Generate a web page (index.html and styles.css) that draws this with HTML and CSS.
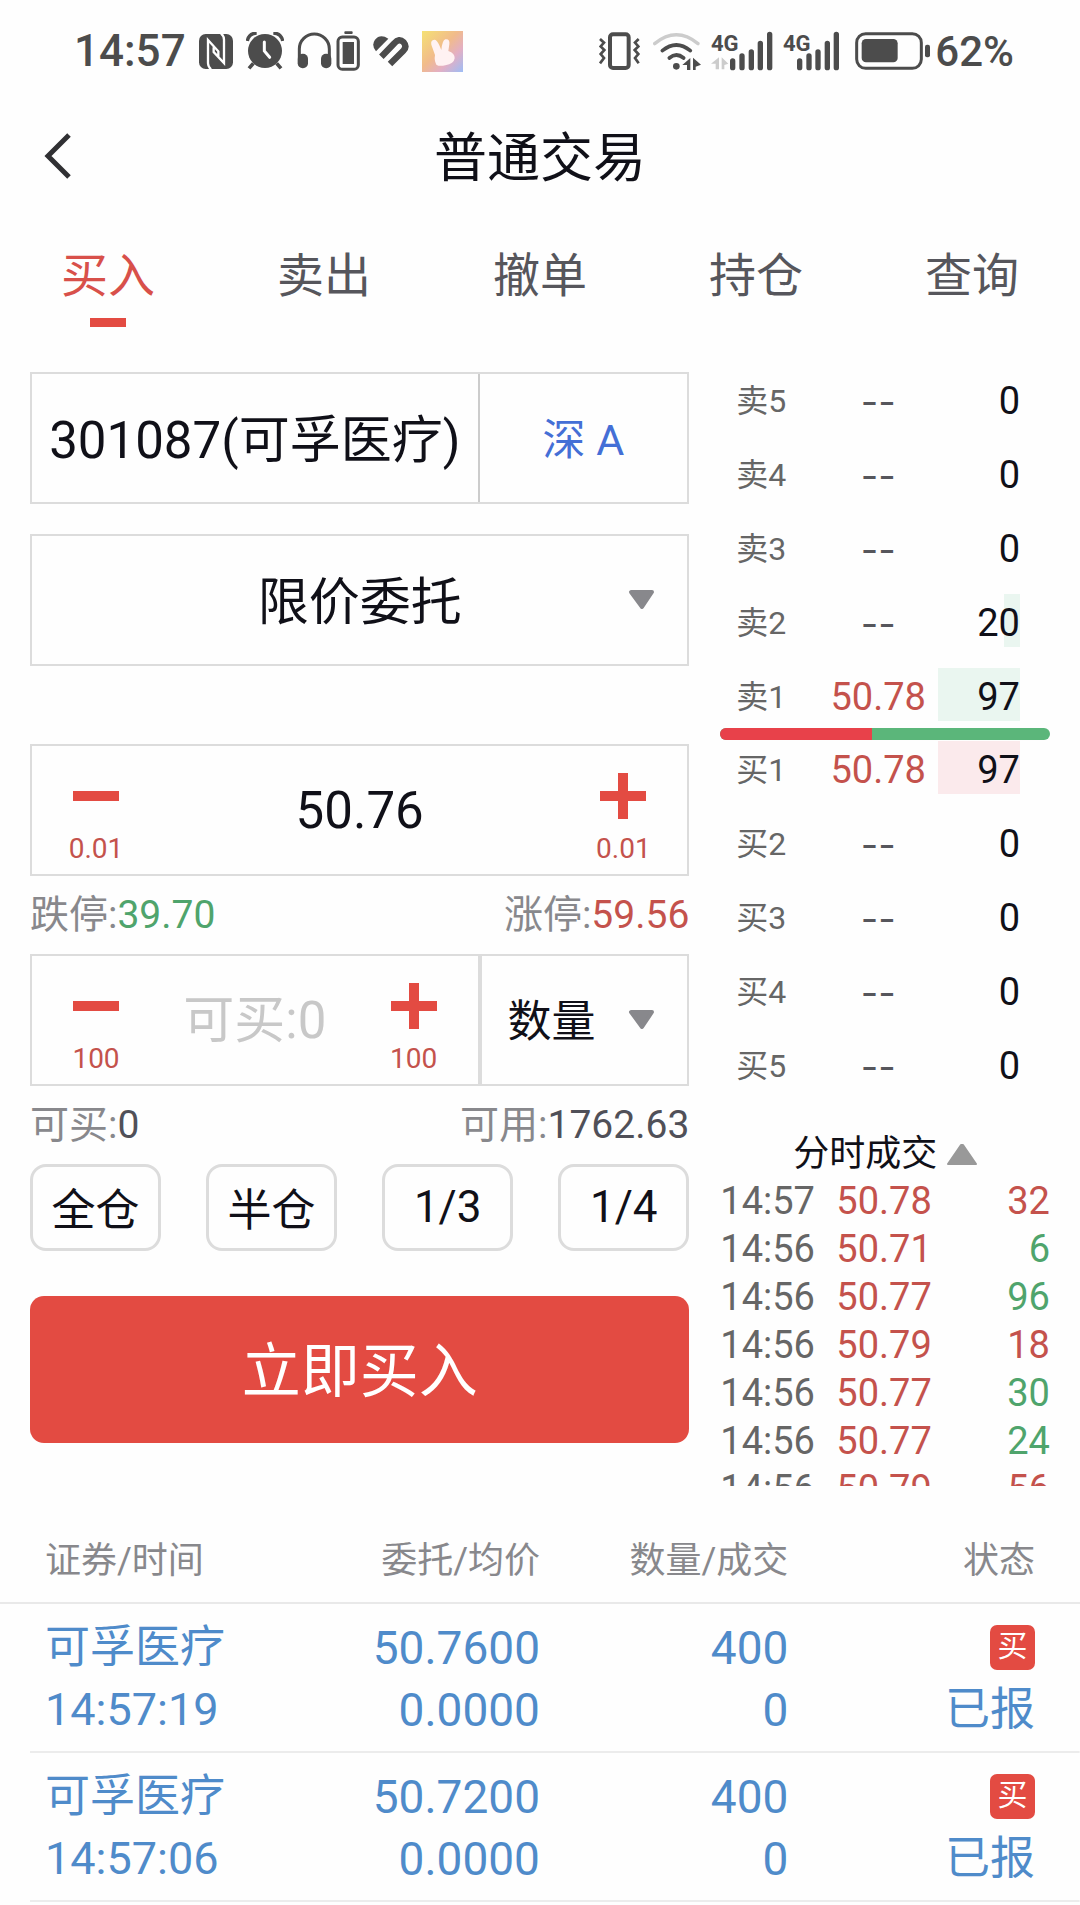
FILE: index.html
```html
<!DOCTYPE html>
<html lang="zh-CN">
<head>
  <meta charset="UTF-8">
  <meta name="viewport" content="width=device-width, initial-scale=1">
  <title>普通交易</title>
  <link rel="stylesheet" href="styles.css">
</head>
<body>
  <div class="status-bar">
    <div class="status-left">
      <span class="time">14:57</span>
      <!-- nfc -->
      <svg class="icon nfc" width="34" height="35" viewBox="0 0 102 105">
        <rect width="102" height="105" rx="20" fill="#4c4c4c"/>
        <path d="M36 106Q27 98 27 88V18L58 52V68M66 -2Q75 6 75 17V87L44 54V40" fill="none" stroke="#fff" stroke-width="7"/>
      </svg>
      <!-- alarm -->
      <svg class="icon alarm" width="38" height="38" viewBox="0 0 114 114">
        <circle cx="57" cy="57" r="51" fill="#4c4c4c"/>
        <path d="M4 27Q8 4 32 3M110 27Q106 4 82 3" fill="none" stroke="#4c4c4c" stroke-width="10"/>
        <path d="M22 94L9 109M92 94L105 109" stroke="#4c4c4c" stroke-width="11"/>
        <path d="M55 30V57L71 76" fill="none" stroke="#fff" stroke-width="9" stroke-linecap="round"/>
      </svg>
      <!-- headphones with battery -->
      <svg class="icon headset" width="63" height="40" viewBox="0 0 189 120">
        <path d="M7 80V54a45 45 0 0 1 90 0V80" fill="none" stroke="#4c4c4c" stroke-width="9"/>
        <rect x="2" y="68" width="31" height="44" rx="15" fill="#4c4c4c"/>
        <rect x="72" y="68" width="31" height="44" rx="15" fill="#4c4c4c"/>
        <rect x="142" y="1" width="25" height="8" rx="3" fill="#4c4c4c"/>
        <rect x="123" y="18" width="61" height="97" rx="13" fill="none" stroke="#4c4c4c" stroke-width="9"/>
        <rect x="137" y="33" width="34" height="66" fill="#4c4c4c"/>
      </svg>
      <!-- health -->
      <svg class="icon health" width="36" height="31" viewBox="0 0 108 93">
        <path d="M9 46Q-6 28 6 11Q22-8 46 8Z" fill="#4c4c4c"/>
        <path d="M25 62L64 22Q78 5 92 19Q103 32 91 44L51 84" stroke="#4c4c4c" stroke-width="19" fill="none"/>
      </svg>
      <!-- rabbit app -->
      <svg class="icon rabbit" width="41" height="41" viewBox="0 0 123 123">
        <defs>
          <linearGradient id="sky" x1="0" y1="0" x2="1" y2="1">
            <stop offset="0" stop-color="#f5e173"/>
            <stop offset=".45" stop-color="#f1bb8b"/>
            <stop offset=".7" stop-color="#e3afc4"/>
            <stop offset="1" stop-color="#9dbdf6"/>
          </linearGradient>
        </defs>
        <rect width="123" height="123" fill="url(#sky)"/>
        <path d="M43 101Q36 88 39 72L28 41Q25 27 37 26Q45 26 52 43L58 57Q61 27 70 25Q84 23 82 40L79 60Q99 67 98 82Q96 98 70 103Q51 107 43 101Z" fill="#fff2f2"/>
      </svg>
    </div>
    <div class="status-right">
      <!-- vibrate -->
      <svg class="icon vibrate" width="43" height="38" viewBox="0 0 129 114">
        <rect x="36" y="7" width="56" height="101" rx="9" fill="none" stroke="#4c4c4c" stroke-width="12"/>
        <path d="M6 21L18 32L8 43L19 54L8 66L18 78L6 94M122 21L111 32L121 43L110 54L121 66L111 78L122 94" fill="none" stroke="#4c4c4c" stroke-width="8"/>
      </svg>
      <!-- wifi -->
      <svg class="icon wifi" width="48" height="39" viewBox="0 0 144 117">
        <path d="M5 35Q70-18 135 35" fill="none" stroke="#ccc" stroke-width="10" stroke-linecap="round"/>
        <path d="M28 56Q70 22 112 56M49 78Q70 60 92 78" fill="none" stroke="#4c4c4c" stroke-width="11" stroke-linecap="round"/>
        <circle cx="70" cy="103" r="10" fill="#4c4c4c"/>
        <path d="M88 99L112 78V114H102V99ZM120 77L144 98L128 104V114H120Z" fill="#4c4c4c"/>
      </svg>
      <!-- mobile signal, sim 1 -->
      <svg class="icon signal" width="62" height="39" viewBox="0 0 186 117">
        <text x="0" y="56" class="net">4G</text>
        <path d="M0 95L24 76V112H14V95ZM32 76L52 95L40 99V112H32Z" fill="#ccc"/>
        <path d="M65 87V107M93 72V107M121 60V107M148 34V107M176 7V107" stroke="#4c4c4c" stroke-width="16" stroke-linecap="round"/>
      </svg>
      <!-- mobile signal, sim 2 -->
      <svg class="icon signal" width="57" height="39" viewBox="0 0 171 117">
        <text x="0" y="56" class="net">4G</text>
        <path d="M50 87V107M78 72V107M105 60V107M133 34V107M160 7V107" stroke="#4c4c4c" stroke-width="16" stroke-linecap="round"/>
      </svg>
      <!-- battery -->
      <svg class="icon battery" width="76" height="38" viewBox="0 0 228 114">
        <rect x="5" y="5" width="194" height="104" rx="27" fill="none" stroke="#4c4c4c" stroke-width="9"/>
        <rect x="20" y="21" width="108" height="70" rx="13" fill="#4c4c4c"/>
        <rect x="210" y="38" width="15" height="38" rx="6" fill="#4c4c4c"/>
      </svg>
      <span class="percent">62%</span>
    </div>
  </div>

  <header class="header">
    <button class="back" aria-label="返回">
      <svg width="28" height="48" viewBox="0 0 28 48">
        <path d="M25 3L4 24L25 45" fill="none" stroke="#303033" stroke-width="5"/>
      </svg>
    </button>
    <h1>普通交易</h1>
  </header>

  <nav class="tabs">
    <a href="#" class="active">买入</a>
    <a href="#">卖出</a>
    <a href="#">撤单</a>
    <a href="#">持仓</a>
    <a href="#">查询</a>
  </nav>

  <main class="trade">
    <form class="order-form">
      <div class="box">
        <input class="wide code" type="text" value="301087(可孚医疗)" aria-label="证券代码">
        <button type="button" class="side market">深 A</button>
      </div>

      <div class="box order-type">
        <select aria-label="委托方式">
          <option>限价委托</option>
        </select>
        <svg class="arrow" width="27" height="20" viewBox="0 0 27 20">
          <path d="M3 2H24L14 17Z" fill="#88888c" stroke="#88888c" stroke-width="4" stroke-linejoin="round"/>
        </svg>
      </div>

      <div class="box price">
        <button type="button" class="step">
          <svg width="46" height="46" viewBox="0 0 46 46"><path d="M0 23H46" stroke="#e34b42" stroke-width="10"/></svg>
          0.01
        </button>
        <input type="text" value="50.76" aria-label="价格">
        <button type="button" class="step">
          <svg width="46" height="46" viewBox="0 0 46 46"><path d="M0 23H46M23 0V46" stroke="#e34b42" stroke-width="10"/></svg>
          0.01
        </button>
      </div>

      <div class="info">
        <span>跌停:<b class="green">39.70</b></span>
        <span>涨停:<b class="red">59.56</b></span>
      </div>

      <div class="box">
        <div class="wide amount">
          <button type="button" class="step">
            <svg width="46" height="46" viewBox="0 0 46 46"><path d="M0 23H46" stroke="#e34b42" stroke-width="10"/></svg>
            100
          </button>
          <input type="text" placeholder="可买:0" aria-label="数量">
          <button type="button" class="step">
            <svg width="46" height="46" viewBox="0 0 46 46"><path d="M0 23H46M23 0V46" stroke="#e34b42" stroke-width="10"/></svg>
            100
          </button>
        </div>
        <div class="side unit">
          <select aria-label="单位">
            <option>数量</option>
          </select>
          <svg class="arrow" width="27" height="20" viewBox="0 0 27 20">
            <path d="M3 2H24L14 17Z" fill="#88888c" stroke="#88888c" stroke-width="4" stroke-linejoin="round"/>
          </svg>
        </div>
      </div>

      <div class="info">
        <span>可买:<b>0</b></span>
        <span>可用:<b>1762.63</b></span>
      </div>

      <div class="portions">
        <button type="button">全仓</button>
        <button type="button">半仓</button>
        <button type="button">1/3</button>
        <button type="button">1/4</button>
      </div>

      <button type="button" class="submit">立即买入</button>
    </form>

    <aside class="quotes">
      <div class="book">
        <div class="level"><span>卖5</span><span class="none">--</span><span class="vol">0</span></div>
        <div class="level"><span>卖4</span><span class="none">--</span><span class="vol">0</span></div>
        <div class="level"><span>卖3</span><span class="none">--</span><span class="vol">0</span></div>
        <div class="level"><span>卖2</span><span class="none">--</span><span class="vol"><i class="bar sell" style="width: 20%"></i>20</span></div>
        <div class="level"><span>卖1</span><span class="red">50.78</span><span class="vol"><i class="bar sell" style="width: 100%"></i>97</span></div>
      </div>
      <div class="ratio"><i style="width: 46%"></i></div>
      <div class="book">
        <div class="level"><span>买1</span><span class="red">50.78</span><span class="vol"><i class="bar buy" style="width: 100%"></i>97</span></div>
        <div class="level"><span>买2</span><span class="none">--</span><span class="vol">0</span></div>
        <div class="level"><span>买3</span><span class="none">--</span><span class="vol">0</span></div>
        <div class="level"><span>买4</span><span class="none">--</span><span class="vol">0</span></div>
        <div class="level"><span>买5</span><span class="none">--</span><span class="vol">0</span></div>
      </div>

      <button type="button" class="ticks-title">
        分时成交
        <svg width="30" height="21" viewBox="0 0 30 21"><path d="M1 20L14 1H16L29 20Z" fill="#999" stroke="#999" stroke-width="2" stroke-linejoin="round"/></svg>
      </button>
      <div class="ticks">
        <div class="tick"><span>14:57</span><span class="red">50.78</span><span class="red">32</span></div>
        <div class="tick"><span>14:56</span><span class="red">50.71</span><span class="green">6</span></div>
        <div class="tick"><span>14:56</span><span class="red">50.77</span><span class="green">96</span></div>
        <div class="tick"><span>14:56</span><span class="red">50.79</span><span class="red">18</span></div>
        <div class="tick"><span>14:56</span><span class="red">50.77</span><span class="green">30</span></div>
        <div class="tick"><span>14:56</span><span class="red">50.77</span><span class="green">24</span></div>
        <div class="tick"><span>14:56</span><span class="red">50.79</span><span class="red">56</span></div>
      </div>
    </aside>
  </main>

  <table class="orders">
    <thead>
      <tr>
        <th>证券/时间</th>
        <th>委托/均价</th>
        <th>数量/成交</th>
        <th>状态</th>
      </tr>
    </thead>
    <tbody>
      <tr>
        <td>可孚医疗<br>14:57:19</td>
        <td>50.7600<br>0.0000</td>
        <td>400<br>0</td>
        <td><span class="tag">买</span><br>已报</td>
      </tr>
      <tr>
        <td>可孚医疗<br>14:57:06</td>
        <td>50.7200<br>0.0000</td>
        <td>400<br>0</td>
        <td><span class="tag">买</span><br>已报</td>
      </tr>
    </tbody>
  </table>
</body>
</html>
```

FILE: styles.css
```css
* {
  box-sizing: border-box;
}

body {
  margin: 0;
  background: #fefefe;
  color: #101018;
  font-family: Roboto, "Noto Sans CJK SC", sans-serif;
}

button, input, select {
  font-family: inherit;
  color: inherit;
  background: none;
  border: none;
  border-radius: 0;
  margin: 0;
  padding: 0;
}

button, select {
  cursor: pointer;
}

svg {
  display: block;
  flex-shrink: 0;
}

a {
  text-decoration: none;
}

.red {
  color: #c4524c;
}

.green {
  color: #4fa46c;
}

/* status bar */
.status-bar {
  display: flex;
  justify-content: space-between;
  align-items: center;
  height: 102px;
  padding: 0 66px 0 74px;
  color: #4c4c4c;
  font-size: 44px;
  font-weight: 500;
}

.status-left, .status-right {
  display: flex;
  align-items: center;
}

.status-left {
  gap: 13px;
}

.status-right {
  gap: 10px;
}

.vibrate {
  margin-right: 2px;
}

.battery {
  margin-left: 5px;
}

.percent {
  margin-left: -6px;
  font-size: 42px;
}

.signal {
  overflow: visible;
}

.net {
  font-size: 66px;
  font-weight: 700;
  fill: #4c4c4c;
}

/* header */
.header {
  position: relative;
  display: flex;
  justify-content: center;
  align-items: center;
  height: 108px;
}

.header h1 {
  margin: 0;
  padding-bottom: 4px;
  font-size: 53px;
  font-weight: 400;
}

.back {
  position: absolute;
  left: 32px;
  padding: 12px;
}

.tabs {
  display: flex;
  padding-top: 36px;
}

.tabs a {
  flex: 1;
  text-align: center;
  font-size: 47px;
  line-height: 60px;
  color: #56565c;
}

.tabs a::after {
  content: "";
  display: block;
  width: 36px;
  height: 9px;
  margin: 12px auto 0;
}

.tabs .active {
  color: #d8504a;
}

.tabs .active::after {
  background: #e34b42;
}

/* order form */
.trade {
  display: grid;
  grid-template-columns: 2fr 1fr;
  gap: 31px;
  padding: 45px 30px 0;
}

.box {
  position: relative;
  display: flex;
  height: 132px;
  border: 2px solid #dcdcdc;
}

.box input, .box select {
  flex: 1;
  width: 100%;
  min-width: 0;
  height: 100%;
  font-size: 51px;
  text-align: center;
  outline: none;
}

.box input::placeholder {
  color: #c8c8c8;
  opacity: 1;
}

.box select {
  appearance: none;
  padding-top: 4px;
  text-align-last: center;
}

.box .wide {
  flex: 0 0 68%;
}

.box .code {
  padding-bottom: 5px;
}

.box .side {
  position: relative;
  flex: 1;
  border-left: 2px solid #ccc;
}

.market {
  padding-bottom: 4px;
  font-size: 43px;
  color: #446fd6;
}

.order-type {
  margin-top: 30px;
}

.price {
  margin-top: 78px;
}

.amount {
  display: flex;
}

.box .unit {
  border-left: 4px solid #dcdcdc;
}

.box .unit select {
  padding-left: 26px;
  font-size: 44px;
  text-align: left;
  text-align-last: left;
}

.arrow {
  position: absolute;
  right: 32px;
  top: 54px;
  pointer-events: none;
}

.step {
  display: flex;
  flex-direction: column;
  align-items: center;
  gap: 12px;
  width: 128px;
  padding-top: 27px;
  font-size: 28px;
  line-height: 36px;
  color: #c4524c;
}

.info {
  display: flex;
  justify-content: space-between;
  font-size: 39px;
  line-height: 78px;
  color: #88888c;
}

.info b {
  font-weight: 400;
}

.info b:not(.red):not(.green) {
  color: #505058;
}

.portions {
  display: grid;
  grid-template-columns: repeat(4, 1fr);
  gap: 45px;
}

.portions button {
  height: 87px;
  padding-bottom: 2px;
  border: 3px solid #dcdcdc;
  border-radius: 16px;
  font-size: 44px;
}

.submit {
  width: 100%;
  height: 147px;
  margin-top: 45px;
  padding-bottom: 6px;
  border-radius: 14px;
  background: #e34b42;
  color: #fff;
  font-size: 59px;
}

/* five-level quotes */
.book {
  display: grid;
  gap: 21px;
  padding: 0 30px 0 16px;
}

.level {
  display: grid;
  grid-template-columns: 82px 1fr 82px;
  height: 53px;
  line-height: 58px;
  font-size: 38px;
  text-align: center;
}

.level span:first-child {
  text-align: left;
  font-size: 32px;
  color: #666;
}

.level .none {
  font-family: Inter, sans-serif;
  color: #56565c;
}

.level .vol {
  position: relative;
  z-index: 0;
  text-align: right;
}

.bar {
  position: absolute;
  z-index: -1;
  top: 0;
  right: 0;
  height: 53px;
}

.bar.sell {
  background: #eaf6f0;
}

.bar.buy {
  background: #fbeaec;
}

.ratio {
  height: 12px;
  margin: 7px 0 1px;
  border-radius: 6px;
  background: #5bb67a;
  overflow: hidden;
}

.ratio i {
  display: block;
  height: 100%;
  background: #e8414a;
}

/* tick list */
.ticks-title {
  display: flex;
  justify-content: center;
  align-items: center;
  gap: 10px;
  width: 100%;
  margin-top: 41px;
  font-size: 36px;
  line-height: 46px;
}

.ticks {
  height: 309px;
  overflow: hidden;
}

.tick {
  display: grid;
  grid-template-columns: 116px 1fr auto;
  font-size: 38px;
  line-height: 48px;
  color: #666;
}

.tick .red {
  color: #c4524c;
}

.tick .green {
  color: #4fa46c;
}

/* today's orders */
.orders {
  width: 100%;
  margin-top: 32px;
  table-layout: fixed;
  border-collapse: collapse;
}

.orders th {
  padding: 2px 0 0;
  border-bottom: 2px solid #e9e9e9;
  font-size: 36px;
  font-weight: 400;
  line-height: 82px;
  text-align: right;
  color: #88888c;
}

.orders td {
  padding: 13px 0 12px;
  font-size: 46px;
  line-height: 62px;
  text-align: right;
  color: #4f8bca;
}

.orders tbody tr {
  background: linear-gradient(#ececec, #ececec) right bottom / calc(100% - 30px) 2px no-repeat;
}

.orders th:first-child, .orders td:first-child {
  width: 26%;
  padding-left: 45px;
  text-align: left;
}

.orders td:first-child, .orders td:last-child {
  font-size: 45px;
}

.orders th:nth-child(2) {
  width: 24%;
}

.orders th:nth-child(3) {
  width: 23%;
}

.orders th:last-child, .orders td:last-child {
  padding-right: 45px;
}

.tag {
  display: inline-block;
  width: 45px;
  height: 45px;
  margin-top: 8px;
  border-radius: 7px;
  background: #e34b42;
  color: #fff;
  font-size: 30px;
  line-height: 42px;
  text-align: center;
  vertical-align: top;
}
```
